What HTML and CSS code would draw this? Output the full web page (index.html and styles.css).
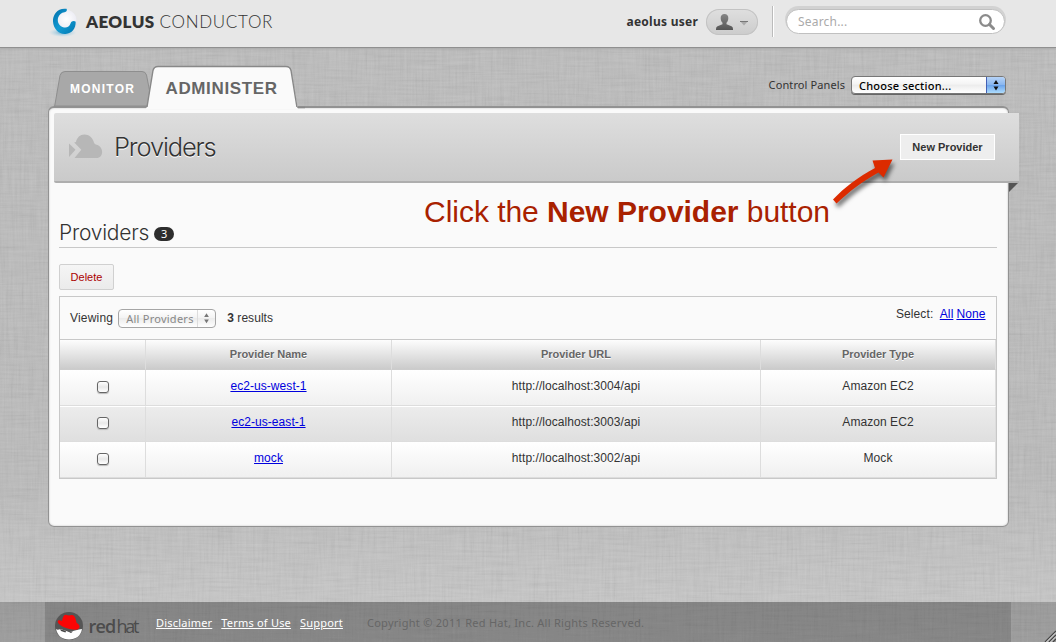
FILE: index.html
```html
<!DOCTYPE html>
<html lang="en">
<head>
<meta charset="utf-8">
<title>Aeolus Conductor</title>
<link rel="stylesheet" href="styles.css">
</head>
<body>
<header class="masthead">
  <div class="brand">
    <svg class="brand-mark" width="32" height="32" viewBox="0 0 32 32">
      <defs>
        <radialGradient id="orb" cx=".55" cy=".4" r=".6"><stop offset="0" stop-color="#fff"/><stop offset=".65" stop-color="#eeeef5"/><stop offset="1" stop-color="#ceced9"/></radialGradient>
        <linearGradient id="blue" x1="0" y1="0" x2="1" y2="1"><stop offset="0" stop-color="#006da9"/><stop offset=".5" stop-color="#139bd2"/><stop offset="1" stop-color="#0076b0"/></linearGradient>
        <radialGradient id="glow"><stop offset="0" stop-color="#58a4cc" stop-opacity=".9"/><stop offset="1" stop-color="#9ed2ea" stop-opacity="0"/></radialGradient>
      </defs>
      <ellipse cx="15.500" cy="25.500" rx="14" ry="4.500" fill="url(#glow)"/>
      <circle cx="18" cy="14.500" r="12" fill="url(#orb)"/>
      <path d="M19.500 1.800C11 .5 5.500 7.500 6 14.500C6.500 22 12 27.500 18.500 27C25 26.500 28.800 21.500 28.700 14.800C27 13.500 24.500 14 23.500 16.500C22.500 19.500 20 21 17 20.400C12.500 19.500 10 15.500 11 11C12 7.500 14.500 5.800 17.500 5.300C19.500 5 20.500 3.200 19.500 1.800Z" fill="url(#blue)"/>
    </svg>
    <span class="brand-name"><b>AEOLUS</b> <span class="brand-light">CONDUCTOR</span></span>
  </div>
  <div class="account">
    <span class="user-name">aeolus user</span>
    <div class="user-menu">
      <svg width="52" height="26" viewBox="0 0 52 26">
        <defs><linearGradient id="person" x1="0" y1="0" x2="0" y2="1"><stop offset="0" stop-color="#858585"/><stop offset="1" stop-color="#555"/></linearGradient></defs>
        <path d="M18.500 5C21 5 22.500 6.700 22.300 9.200C22.200 11.300 21.500 12.700 20.500 13.800V15.200L25.500 17.200Q27 18 27 20V21H10V20Q10 18 11.500 17.200L16.500 15.200V13.800C15.500 12.700 14.800 11.300 14.700 9.200C14.500 6.700 16 5 18.500 5Z" fill="url(#person)"/>
        <path d="M34 12H42L38 16.500Z" fill="#aaa"/><path d="M34 12H42V13H34Z" fill="#777"/>
      </svg>
    </div>
    <div class="search">
      <span>Search...</span>
      <svg width="18" height="18" viewBox="0 0 18 18"><circle cx="7.500" cy="6.500" r="5.300" fill="none" stroke="#8b8b8b" stroke-width="2.300"/><path d="M11.500 10.500L15.500 14.500" stroke="#8b8b8b" stroke-width="3" stroke-linecap="round"/></svg>
    </div>
  </div>
</header>

<div class="page">
  <nav class="topnav">
    <svg class="tabs" width="260" height="45" viewBox="45 64 260 45">
      <path d="M54.500 107L60 75.500Q61 71.500 65 71.500H142Q145.500 71.500 146.500 75L150 93V106H54.500" fill="#a8a8a8" stroke="#8e8e8e"/>
      <path d="M147 107L153 70.500Q154 66.500 158 66.500H286Q290 66.500 291 70.500L297.500 107V109H146Z" fill="#fafafa"/>
      <path d="M147 107L153 70.500Q154 66.500 158 66.500H286Q290 66.500 291 70.500L297 107.500H305" fill="none" stroke="#888" stroke-width="1.400"/>
      <path d="M146 109L147 107H297L298 109Z" fill="#fafafa"/>
      <text class="tab-label tab-monitor" x="70" y="93" textLength="64">MONITOR</text>
      <text class="tab-label tab-admin" x="165.500" y="94" textLength="111.500">ADMINISTER</text>
    </svg>
    <div class="panels">
      <span class="panels-label">Control Panels</span>
      <div class="select select-main"><span>Choose section...</span><svg width="18" height="17" viewBox="0 0 18 17"><path d="M9 3L11.500 7H6.500ZM9 13.500L6.500 9.500H11.500Z" fill="#111"/></svg></div>
    </div>
  </nav>

  <main class="panel">
    <div class="titlebar">
      <svg width="35" height="28" viewBox="0 0 35 28"><path d="M6.500 25L13.300 16.800L6.200 9.600Q7 9 8 8.900C9 4.600 12 1.500 16.400 1.500C21 1.500 25 5 26 9.700C27 12 30 11.500 31.500 13.200C36 17 34.500 25 28.500 25Z" fill="#b7b7b7"/><path d="M1 10.500L7.500 16.800L1 24Z" fill="#b7b7b7"/></svg>
      <h1>Providers</h1>
      <button class="new-provider">New Provider</button>
      <i class="fold"></i>
    </div>
    <div class="callout">Click the <b>New Provider</b> button</div>
    <svg class="arrow" width="72" height="58" viewBox="828 152 72 58"><path d="M833 199.500C845 187 858 177 875 168L872.500 160.500L892.500 159.500L883.500 177.500L878.500 172.500C862 181.500 850 191 836.500 203.500Z" fill="#dc2b00"/></svg>

    <section class="listing">
      <h2><span class="h2-text">Providers</span> <span class="count">3</span></h2>
      <button class="delete">Delete</button>
      <div class="table-box">
        <div class="filter">
          <span class="viewing">Viewing</span>
          <div class="select select-filter"><span>All Providers</span><svg width="18" height="17" viewBox="0 0 18 17"><path d="M9 3L11.500 7H6.500ZM9 13.500L6.500 9.500H11.500Z" fill="#777"/></svg></div>
          <span class="results"><b>3</b> results</span>
          <span class="pick">Select: <a>All</a><a>None</a></span>
        </div>
        <div class="row head"><div></div><div>Provider Name</div><div>Provider URL</div><div>Provider Type</div></div>
        <div class="row"><div><i class="check"></i></div><div><a>ec2-us-west-1</a></div><div>http://localhost:3004/api</div><div>Amazon EC2</div></div>
        <div class="row alt"><div><i class="check"></i></div><div><a>ec2-us-east-1</a></div><div>http://localhost:3003/api</div><div>Amazon EC2</div></div>
        <div class="row"><div><i class="check"></i></div><div><a>mock</a></div><div>http://localhost:3002/api</div><div>Mock</div></div>
      </div>
    </section>
  </main>
</div>

<footer class="footer">
  <div class="footer-inner">
    <svg class="redhat" width="88" height="32" viewBox="54 610 88 32">
      <circle cx="69" cy="626" r="14" fill="#555"/>
      <path d="M56 629C57.500 630.500 59 629.500 60.500 629L69 632L79 629.500L82 629C81 636 75.500 639.500 69 639.500C62.500 639.500 57.500 636 56 629Z" fill="#fff"/>
      <path d="M60 629L66 631L65.500 632.500L61 631ZM68 631.500L73 631.500L71 633Z" fill="#444"/>
      <path d="M62 621C62.800 618 63.500 614.500 66 614.800Q69 616 71.500 615C75 614.500 76 620 76.500 622.800C80.500 625 81 629.500 75.500 629.800C68 629.500 59 626 57.700 622C57.500 620 59.500 619.500 62 621Z" fill="#fb0505"/>
      <text class="wordmark wordmark-bold" x="88.500" y="632.500" textLength="28">red</text>
      <text class="wordmark" x="116.500" y="632.500" textLength="23">hat</text>
    </svg>
    <a class="f1">Disclaimer</a><a class="f2">Terms of Use</a><a class="f3">Support</a>
    <span class="copyright">Copyright © 2011 Red Hat, Inc. All Rights Reserved.</span>
  </div>
  <svg class="grip" width="12" height="12" viewBox="0 0 12 12"><path d="M1 12L12 1M5 12L12 5M9 12L12 9" stroke="#444" stroke-width="1.200"/><path d="M2.500 12L12 2.500M6.500 12L12 6.500" stroke="#ddd"/></svg>
</footer>
</body>
</html>
```

FILE: styles.css
```css
* { box-sizing: border-box; }

body {
  margin: 0;
  height: 642px;
  overflow: hidden;
  display: flex;
  flex-direction: column;
  font: 12px "Liberation Sans", Arial, sans-serif;
  color: #333;
  background-color: #bcbcbc;
  background-image:
    url("data:image/svg+xml,%3Csvg xmlns='http://www.w3.org/2000/svg' width='1056' height='642'%3E%3Cfilter id='v' x='0' y='0' width='100%25' height='100%25'%3E%3CfeTurbulence type='fractalNoise' baseFrequency='.45 .025' numOctaves='3' seed='4'/%3E%3CfeColorMatrix values='1 0 0 0 0 1 0 0 0 0 1 0 0 0 0 0 0 0 0 .075'/%3E%3C/filter%3E%3Cfilter id='h' x='0' y='0' width='100%25' height='100%25'%3E%3CfeTurbulence type='fractalNoise' baseFrequency='.025 .45' numOctaves='3' seed='9'/%3E%3CfeColorMatrix values='1 0 0 0 0 1 0 0 0 0 1 0 0 0 0 0 0 0 0 .075'/%3E%3C/filter%3E%3Crect width='1056' height='642' filter='url(%23v)'/%3E%3Crect width='1056' height='642' filter='url(%23h)'/%3E%3C/svg%3E"),
    linear-gradient(#bcbcbc, #bababa 75%, #cacaca);
}

.masthead {
  flex: none;
  height: 48px;
  padding: 0 51px 0 47px;
  display: flex;
  justify-content: space-between;
  background: #e7e7e7;
  border-bottom: 1px solid #909090;
  box-shadow: 0 1px 2px #aaa;
}
.brand { display: flex; padding-top: 7px; }
.brand-name {
  margin: 4px 0 0 7px;
  font: 17px/22px Lato, sans-serif;
  letter-spacing: .5px;
  color: #333;
  white-space: nowrap;
}
.brand-name b { font-weight: 800; letter-spacing: .4px; }
.brand-light { font-weight: 300; letter-spacing: .7px; }

.account { display: flex; align-items: flex-start; padding-top: 6px; }
.user-name {
  margin: 8px 8px 0 0;
  font: bold 12px/16px "Noto Sans", sans-serif;
  letter-spacing: .25px;
}
.user-menu {
  width: 52px;
  height: 26px;
  margin: 3px 14px 0 0;
  border-radius: 13px;
  background: linear-gradient(#dfdfdf, #ccc);
  box-shadow: inset 0 0 0 1px #c3c3c3;
}
.search {
  display: flex;
  justify-content: space-between;
  width: 219px;
  height: 25px;
  margin: 3px 0 0 14px;
  padding: 4px 8px 0 11px;
  border-radius: 13px;
  border: 1px solid #c0c0c0;
  background: #fff;
  box-shadow: 0 -2px 0 1px #d2d2d2;
  font: 12px/15px "Noto Sans", sans-serif;
  letter-spacing: .2px;
  color: #aaa;
  position: relative;
}
.search::before {
  content: "";
  position: absolute;
  left: -15px;
  top: -4px;
  width: 2px;
  height: 31px;
  background: linear-gradient(90deg, #bbb 50%, #fff 50%);
}

.page { flex: none; height: 554px; padding: 0 48px; }
.topnav { height: 58px; display: flex; justify-content: space-between; }
.tabs { flex: none; margin: 16px 0 0 -3px; position: relative; z-index: 1; }
.tab-label { font-family: "Liberation Sans", Arial, sans-serif; font-weight: bold; }
.tab-monitor { font-size: 12px; fill: #fff; }
.tab-admin { font-size: 17px; fill: #666; }
.panels { display: flex; padding: 27px 2px 0 0; }
.panels-label { font: 11px/20px "Noto Sans", sans-serif; letter-spacing: .1px; margin-right: 6px; }

.select {
  display: flex;
  justify-content: space-between;
  align-items: center;
  overflow: hidden;
  border: 1px solid #777;
  border-radius: 4px;
  background: linear-gradient(#fff, #f4f4f4 45%, #ececec 50%, #fff);
  font: 11px/17px "Noto Sans", sans-serif;
}
.select-main { width: 155px; height: 18px; margin-top: 1px; padding-left: 7px; color: #000; font-weight: 500; letter-spacing: .22px; box-shadow: 0 1px 0 #666; }
.select-main svg { background: linear-gradient(#b6d3f7, #8ab7f0 45%, #6da5ec 50%, #b5e3ff); box-shadow: 0 0 0 1px #4360b5; }

.panel {
  height: 421px;
  border: 1px solid #929292;
  border-top: 2px solid #929292;
  border-radius: 6px;
  background: #fafafa;
  box-shadow: inset 0 0 2px #bbb;
  width: 961px;
  margin-left: -.5px;
  padding: 5px 5px 5px 5.500px;
  position: relative;
}
.titlebar {
  position: relative;
  width: 965px;
  height: 70px;
  padding: 0 24px 0 14px;
  display: flex;
  align-items: center;
  background: linear-gradient(#dedede, #cacaca);
  border-bottom: 2px solid #aeaeae;
  border-radius: 2px 0 0 2px;
}
.titlebar h1 {
  flex: 1;
  margin: -1px 0 0 11px;
  font: 300 25.500px/30px Inter, sans-serif;
  letter-spacing: -1.150px;
  text-shadow: 0 1px 0 #fff;
  color: #333;
}
.fold {
  position: absolute;
  right: 1px;
  top: 70px;
  border-top: 9px solid #555;
  border-right: 9px solid transparent;
}
.new-provider {
  width: 95px;
  height: 26px;
  padding: 0;
  border: 1px solid #fff;
  background: #eee;
  font: bold 11px "Liberation Sans", Arial, sans-serif;
  color: #333;
}
.callout {
  position: absolute;
  left: 375.500px;
  top: 86px;
  font-size: 30px;
  line-height: 36px;
  letter-spacing: -.03px;
  color: #a92100;
  white-space: nowrap;
}
.arrow { position: absolute; left: 779.500px; top: 44px; filter: drop-shadow(2px 4px 2px #0008); }

.listing { padding: 35px 6px 0 5px; }
.listing h2 {
  display: flex;
  align-items: center;
  height: 30px;
  margin: 0;
  border-bottom: 1px solid #c8c8c8;
  font: 300 21px/28px Inter, sans-serif;
  letter-spacing: -.23px;
}
.count {
  width: 20px;
  height: 14px;
  margin: 3px 0 0 5px;
  border-radius: 7px;
  background: #2d2d2d;
  color: #fff;
  font: 11px/14px "Noto Sans", sans-serif;
  text-align: center;
}
.delete {
  display: block;
  width: 55px;
  height: 26px;
  margin: 16px 0 6px;
  padding: 0 0 1px;
  border: 1px solid #d0d0d0;
  border-radius: 2px;
  background: linear-gradient(#f5f5f5, #ebebeb);
  font: 11px "Liberation Sans", Arial, sans-serif;
  color: #a00;
}
.table-box { border: 1px solid #c8c8c8; }
.filter { height: 43px; display: flex; align-items: center; padding: 0 10px; border-bottom: 1px solid #c8c8c8; }
.viewing { margin-right: 5px; letter-spacing: .2px; }
.select-filter { width: 98px; height: 19px; margin-right: 11px; padding-left: 7px; border-color: #a5a5a5; color: #888; letter-spacing: .25px; }
.select-filter svg { border-left: 1px solid #ddd; }
.results { letter-spacing: .05px; }
.pick { margin: -8px 0 0 auto; letter-spacing: .1px; }
a { color: #00d; text-decoration: underline; }
.pick a { margin-left: 3px; }
.row { display: grid; grid-template-columns: 86px 246px 369px 235px; height: 36px; }
.row div {
  display: flex;
  justify-content: center;
  padding-top: 9px;
  line-height: 14px;
  letter-spacing: .06px;
  border-right: 1px solid #ddd;
  border-bottom: 1px solid #ddd;
  box-shadow: 1px 0 #fff;
  background: linear-gradient(#fff, #f0f0f0);
}
.row div:last-child { box-shadow: none; }
.row.alt div { background: linear-gradient(#ececec, #dfdfdf); border-top: 1px solid #fff; padding-top: 8px; }
.row.head { height: 30px; font-weight: bold; font-size: 11px; color: #666; text-shadow: 0 1px #fff; }
.row.head div { padding-top: 7px; letter-spacing: -.03px; background: linear-gradient(#fdfdfd, #cbcbcb); box-shadow: none; border-bottom-color: #ccc; }
.check {
  width: 12px;
  height: 12px;
  margin-top: 2px;
  border: 1px solid #666;
  border-radius: 3px;
  background: linear-gradient(#fff, #e8e8e8 50%, #fff);
  box-shadow: 0 1px 1px #bbb;
}

.footer { flex: none; height: 40px; padding: 0 45px; background: rgba(0,0,0,.21); position: relative; }
.footer-inner {
  height: 40px;
  display: flex;
  padding: 8px 0 0 9px;
  background: rgba(0,0,0,.14);
  font: 11px/26px "Noto Sans", sans-serif;
  letter-spacing: .2px;
}
.redhat { flex: none; margin-right: 14px; }
.wordmark { font-family: "Open Sans", sans-serif; font-size: 18px; fill: #4c4c4c; }
.wordmark-bold { font-weight: 600; }
.footer a { color: #fff; margin-right: 9px; white-space: nowrap; }
.copyright { margin-left: 15px; letter-spacing: .27px; color: #666; white-space: nowrap; }
.grip { position: absolute; right: 0; bottom: 0; }
```
